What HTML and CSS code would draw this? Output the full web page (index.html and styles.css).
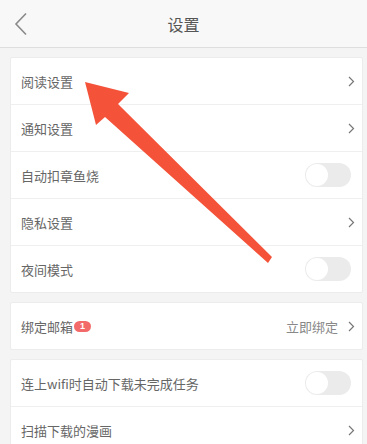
FILE: index.html
```html
<!DOCTYPE html>
<html lang="zh">
<head>
<meta charset="utf-8">
<link rel="stylesheet" href="styles.css">
</head>
<body>
<div class="page">
  <header class="topbar">
    <svg class="back" width="14" height="24" viewBox="0 0 14 24"><polyline points="12,1.5 2,12 12,22.5" fill="none" stroke="#8a8a8a" stroke-width="1.6"/></svg>
    <div class="title">设置</div>
  </header>
  <div class="card">
    <div class="row"><span class="label">阅读设置</span><svg class="chev" width="7" height="11" viewBox="0 0 7 11"><polyline points="1,1 5.5,5.5 1,10" fill="none" stroke="#777" stroke-width="1.2"/></svg></div>
    <div class="row"><span class="label">通知设置</span><svg class="chev" width="7" height="11" viewBox="0 0 7 11"><polyline points="1,1 5.5,5.5 1,10" fill="none" stroke="#777" stroke-width="1.2"/></svg></div>
    <div class="row"><span class="label">自动扣章鱼烧</span><span class="toggle"></span></div>
    <div class="row"><span class="label">隐私设置</span><svg class="chev" width="7" height="11" viewBox="0 0 7 11"><polyline points="1,1 5.5,5.5 1,10" fill="none" stroke="#777" stroke-width="1.2"/></svg></div>
    <div class="row"><span class="label">夜间模式</span><span class="toggle"></span></div>
  </div>
  <div class="card">
    <div class="row"><span class="label">绑定邮箱<span class="badge">1</span></span><span class="right"><span class="hint">立即绑定</span><svg class="chev" width="7" height="11" viewBox="0 0 7 11"><polyline points="1,1 5.5,5.5 1,10" fill="none" stroke="#777" stroke-width="1.2"/></svg></span></div>
  </div>
  <div class="card">
    <div class="row"><span class="label">连上wifi时自动下载未完成任务</span><span class="toggle"></span></div>
    <div class="row"><span class="label">扫描下载的漫画</span><svg class="chev" width="7" height="11" viewBox="0 0 7 11"><polyline points="1,1 5.5,5.5 1,10" fill="none" stroke="#777" stroke-width="1.2"/></svg></div>
  </div>
  <svg class="arrow" width="367" height="444" viewBox="0 0 367 444"><polygon points="85,82 129,93 118,104 272,257 268,263 105,117 96,125" fill="#f4533a"/></svg>
</div>
</body>
</html>
```
FILE: styles.css
```css
html, body { margin: 0; padding: 0; }
body { background: #f4f4f4; font-family: "Noto Sans CJK SC", "Noto Sans", sans-serif; }
.page { position: relative; width: 367px; height: 444px; overflow: hidden; }
.topbar { height: 47px; background: #f8f8f8; border-bottom: 1px solid #dedede; display: flex; align-items: center; justify-content: center; position: relative; }
.back { position: absolute; left: 14px; top: 12px; }
.title { font-size: 16px; color: #555; }
.card { margin: 9px 4px 9px 10px; background: #fff; border: 1px solid #ececec; border-radius: 2px; }
.row { height: 46px; display: flex; align-items: center; justify-content: space-between; padding: 0 11px 0 10px; border-top: 1px solid #efefef; }
.row:first-child { border-top: none; }
.label { font-size: 13px; color: #666; display: flex; align-items: center; }
.chev { display: block; margin-right: -4px; }
.toggle { width: 46px; height: 24px; border-radius: 12px; background: #ebebeb; position: relative; }
.toggle::after { content: ""; position: absolute; left: 1px; top: 1px; width: 22px; height: 22px; border-radius: 50%; background: #fff; }
.badge { display: inline-block; margin-left: 1px; width: 17px; height: 11px; line-height: 11px; border-radius: 6px; background: #f36a6a; color: #fff; font-size: 9px; text-align: center; font-family: "Liberation Sans", sans-serif; font-weight: bold; }
.right { display: flex; align-items: center; gap: 10px; }
.hint { font-size: 13px; color: #888; }
.arrow { position: absolute; left: 0; top: 0; }
```
